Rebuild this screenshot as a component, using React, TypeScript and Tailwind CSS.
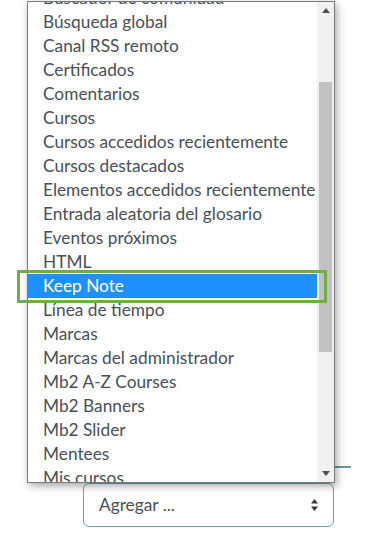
import React from "react";

const items = [
  "Buscador de comunidad",
  "Búsqueda global",
  "Canal RSS remoto",
  "Certificados",
  "Comentarios",
  "Cursos",
  "Cursos accedidos recientemente",
  "Cursos destacados",
  "Elementos accedidos recientemente",
  "Entrada aleatoria del glosario",
  "Eventos próximos",
  "HTML",
  "Keep Note",
  "Línea de tiempo",
  "Marcas",
  "Marcas del administrador",
  "Mb2 A-Z Courses",
  "Mb2 Banners",
  "Mb2 Slider",
  "Mentees",
  "Mis cursos",
  "Navegación",
];

export default function App() {
  return (
    <div
      className="relative w-[369px] h-[556px] overflow-hidden bg-white"
      style={{ fontFamily: "Lato, 'Open Sans', sans-serif" }}
    >
      {/* background content */}
      <div className="flex flex-col items-end pr-[18px] pt-[466px]">
        <div className="h-[2px] w-[40px] bg-[#5f9fa1]" />
      </div>
      <div className="ml-[83px] mt-[15px] flex h-[44px] w-[251px] items-center justify-between rounded-[6px] border border-[#6aa6a8] pl-[15px] pr-[14px] text-[17.3px] text-[#495057]">
        <span>Agregar ...</span>
        <svg width="9" height="14" viewBox="0 0 9 14">
          <path d="M4.5 1 L8 5.5 L1 5.5 Z" fill="#343a40" />
          <path d="M4.5 13 L8 8.5 L1 8.5 Z" fill="#343a40" />
        </svg>
      </div>

      {/* dropdown listbox overlay */}
      <div className="absolute left-[27px] top-[1px] flex h-[482px] w-[308px] border border-[#7a7a7a] bg-white shadow-[2px_3px_8px_rgba(0,0,0,0.35)]">
        <div className="relative flex-1 overflow-hidden">
          <div className="mt-[-16px] flex flex-col">
            {items.map((it) => (
              <div
                key={it}
                className={
                  it === "Keep Note"
                    ? "flex h-[24px] items-center whitespace-nowrap bg-[#1e90ff] pl-[15px] text-[17.3px] text-white"
                    : "flex h-[24px] items-center whitespace-nowrap pl-[15px] text-[17.3px] text-[#495057]"
                }
              >
                {it}
              </div>
            ))}
          </div>
        </div>
        <div className="flex w-[17px] flex-col items-center bg-[#f1f1f1]">
          <div className="flex h-[17px] w-full items-center justify-center">
            <svg width="8" height="5" viewBox="0 0 8 5">
              <path d="M4 0 L8 5 L0 5 Z" fill="#505050" />
            </svg>
          </div>
          <div className="mt-[63px] h-[270px] w-[13px] bg-[#c1c1c1]" />
          <div className="flex-1" />
          <div className="flex h-[17px] w-full items-center justify-center">
            <svg width="8" height="5" viewBox="0 0 8 5">
              <path d="M0 0 L8 0 L4 5 Z" fill="#505050" />
            </svg>
          </div>
        </div>
      </div>

      {/* green highlight annotation */}
      <div className="absolute left-[17px] top-[270px] h-[33px] w-[310px] border-[3px] border-[#70ad47]" />
    </div>
  );
}
